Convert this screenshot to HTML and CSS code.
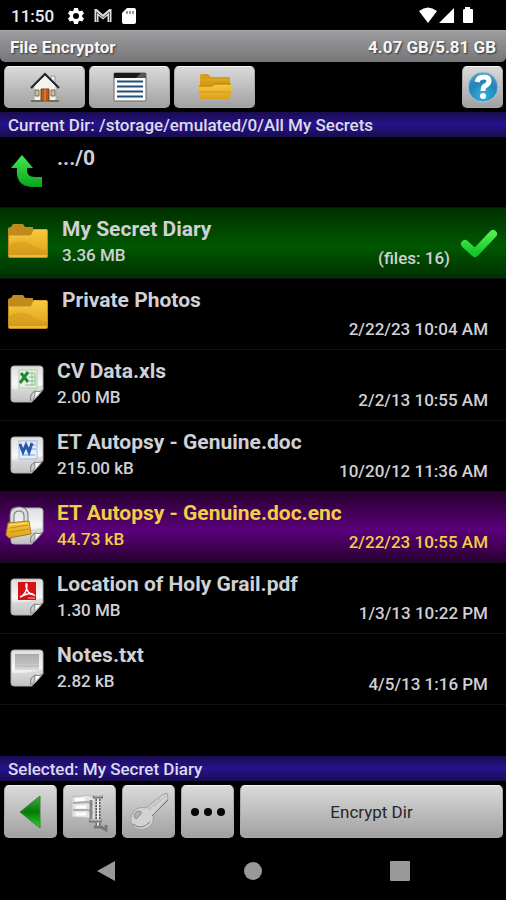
FILE: index.html
```html
<!DOCTYPE html>
<html lang="en">
<head>
<meta charset="utf-8">
<meta name="viewport" content="width=device-width, initial-scale=1">
<title>File Encryptor</title>
<link rel="stylesheet" href="styles.css">
</head>
<body>
<svg class="defs" aria-hidden="true">
  <defs>
    <linearGradient id="gold" x1="0" y1="0" x2="0" y2="1"><stop offset="0" stop-color="#f8c83a"/><stop offset="1" stop-color="#dda01c"/></linearGradient>
    <linearGradient id="paper" x1="0" y1="0" x2="0" y2="1"><stop offset="0" stop-color="#dedede"/><stop offset=".5" stop-color="#f8f8f8"/><stop offset="1" stop-color="#c4c4c4"/></linearGradient>
    <linearGradient id="green" x1="0" y1="0" x2="0" y2="1"><stop offset="0" stop-color="#45e84f"/><stop offset="1" stop-color="#08a51c"/></linearGradient>
    <linearGradient id="tick" x1="0" y1="0" x2="0" y2="1"><stop offset="0" stop-color="#4af04a"/><stop offset="1" stop-color="#14c62c"/></linearGradient>
    <linearGradient id="arrow" x1="0" y1="0" x2="0" y2="1"><stop offset="0" stop-color="#36b336"/><stop offset=".5" stop-color="#067806"/><stop offset="1" stop-color="#22dd22"/></linearGradient>
    <linearGradient id="note" x1="0" y1="0" x2="0" y2="1"><stop offset="0" stop-color="#a8a8a8"/><stop offset="1" stop-color="#dadada"/></linearGradient>
    <radialGradient id="blue" cx=".5" cy=".8" r=".8"><stop offset="0" stop-color="#38b0e0"/><stop offset=".6" stop-color="#2484b8"/><stop offset="1" stop-color="#5b9fc8"/></radialGradient>
    <symbol id="folder" viewBox="0 0 42 38">
      <path d="M1 6Q1 4 4 4L6 1H16L18 4H26V6H38Q41 6 41 8V33Q41 35 39 35H3Q1 35 1 33Z" fill="#c08a1c"/>
      <path d="M2 13H24L27 7H40V33Q40 34 38 34H3Q2 34 2 33Z" fill="url(#gold)"/>
      <path d="M2 13H24L27 7H40" fill="none" stroke="#f2c850"/>
      <path d="M2 22Q10 17 20 19Q34 28 40 28V33Q40 34 38 34H2Z" fill="#c78a14" opacity=".35"/>
      <path d="M2 33H40" stroke="#ffda62"/>
    </symbol>
    <symbol id="page" viewBox="0 0 36 38">
      <path d="M5 1H31Q34 1 34 4V25L23 37H5Q2 37 2 34V4Q2 1 5 1Z" fill="url(#paper)" stroke="#aaa"/>
      <path d="M2 24Q18 25 34 20V25L23 37H5Q2 37 2 34Z" fill="#bbb" opacity=".35"/>
      <path d="M34 25Q30 28 26 26Q27 32 23 37Z" fill="#fff" stroke="#858585"/>
      <path d="M22 36Q20 29 26 26" fill="none" stroke="#777"/>
    </symbol>
  </defs>
</svg>

<header>
  <div class="status">
    <span class="clock">11:50</span>
    <svg class="gear" width="16" height="16" viewBox="0 0 16 16"><path fill="#fff" fill-rule="evenodd" d="M6 0H10L10.500 2.500L12 3.300L14.300 2.400L16 5.500L14.200 7.200V8.800L16 10.500L14.300 13.600L12 12.700L10.500 13.500L10 16H6L5.500 13.500L4 12.700L1.700 13.600L0 10.500L1.800 8.800V7.200L0 5.500L1.700 2.400L4 3.300L5.500 2.500ZM8 5A3 3 0 1 0 8 11A3 3 0 1 0 8 5Z"/></svg>
    <svg width="18" height="14" viewBox="0 0 18 14"><path d="M2.500 13V2.500L9 8L15.500 2.500V13" fill="none" stroke="#ddd" stroke-width="4"/><path d="M2.500 12.500V3L9 8.500L15.500 3V12.500" fill="none" stroke="#555" stroke-width="1"/></svg>
    <svg class="sd" width="14" height="16" viewBox="0 0 14 16"><path d="M5 0H12Q14 0 14 2V14Q14 16 12 16H2Q0 16 0 14V5Z" fill="#fff"/><path d="M5 3V6M8 3V6M11 3V6" stroke="#777" stroke-width="1.500"/></svg>
    <svg class="signal" width="56" height="17" viewBox="0 0 56 17"><path d="M1 4Q10-3 19 4L10 16ZM21 16L36 1V16Z" fill="#fff"/><path d="M47 0H52V2H54Q55 2 55 3V15Q55 16 54 16H46Q45 16 45 15V3Q45 2 47 2Z" fill="#fff"/></svg>
  </div>
  <div class="titlebar"><h1>File Encryptor</h1><span>4.07 GB/5.81 GB</span></div>
  <nav class="toolbar">
    <button class="btn tool" aria-label="Home"><svg width="32" height="32" viewBox="0 0 32 32"><path d="M22 5H26V12L22 8Z" fill="#eee" stroke="#999"/><path d="M5 15L16 4L27 15V30H5Z" fill="#f4f3ee" stroke="#aaa"/><path d="M2 17L16 3L30 17" fill="none" stroke="#252525" stroke-width="2"/><path d="M12 18H20V30H12Z" fill="#bd5913" stroke="#71401d"/><path d="M16 18V30" stroke="#ed9852"/><path d="M6 19H10V25H6ZM22 19H26V25H22Z" fill="#cbbd9b" stroke="#776f60"/><path d="M2 30H12M20 30H30" stroke="#64735a" stroke-width="2"/></svg></button>
    <button class="btn tool" aria-label="List"><svg width="34" height="30" viewBox="0 0 34 30"><rect x="1" y="1" width="32" height="28" rx="1" fill="#fbfbfb" stroke="#666"/><path d="M1 1H33V6H1Z" fill="#171a20"/><path d="M23 6L28 1H33V6Z" fill="#555"/><path d="M4 9.500H30M4 14.500H30M4 19.500H30M4 24.500H30" stroke="#235078" stroke-width="2"/></svg></button>
    <button class="btn tool" aria-label="Folders"><svg width="34" height="28" viewBox="0 0 34 28"><path d="M2 3Q2 1 4 1H10L13 4H32V24H2Z" fill="#d99c18"/><path d="M2 7H32" stroke="#e2aa28"/><path d="M0 13H14L16 11H34L32 26H2Z" fill="url(#gold)"/><path d="M1 13H14L16 11H33" fill="none" stroke="#ab7a13"/><path d="M1 19H33" stroke="#cf9a20"/></svg></button>
    <button class="btn help" aria-label="Help"><svg width="34" height="34" viewBox="0 0 34 34"><circle cx="17" cy="17" r="15" fill="url(#blue)" stroke="#a9c9da"/><path d="M11 12Q12 7 18 7Q23 7 23 11Q23 14 19 16Q17 17 17 21" fill="none" stroke="#fff" stroke-width="5"/><circle cx="17" cy="26" r="3" fill="#fff"/></svg></button>
  </nav>
  <div class="pathbar">Current Dir: /storage/emulated/0/All My Secrets</div>
</header>

<main>
  <ul class="files">
    <li class="row">
      <svg class="icon" width="52" height="40" viewBox="0 0 52 40"><path d="M22 4L33 17H27Q26 26 35 26H42V36H32Q15 35 17 17H11Z" fill="url(#green)"/></svg>
      <div class="info"><h2>.../0</h2></div>
    </li>
    <li class="row folder green">
      <svg class="icon" width="52" height="40" viewBox="0 0 52 40"><use href="#folder" x="7" y="1" width="42" height="38"/></svg>
      <div class="info"><h2>My Secret Diary</h2><p>3.36 MB</p></div>
      <span class="meta">(files: 16)</span>
      <svg class="check" width="38" height="30" viewBox="0 0 38 30"><path d="M5 15L15 24L33 5" fill="none" stroke="url(#tick)" stroke-width="8" stroke-linecap="round" stroke-linejoin="round"/></svg>
    </li>
    <li class="row folder">
      <svg class="icon" width="52" height="40" viewBox="0 0 52 40"><use href="#folder" x="7" y="1" width="42" height="38"/></svg>
      <div class="info"><h2>Private Photos</h2></div><span class="meta">2/22/23 10:04 AM</span>
    </li>
    <li class="row">
      <svg class="icon" width="52" height="40" viewBox="0 0 52 40"><use href="#page" x="9" y="1" width="36" height="38"/><rect x="19" y="6" width="18" height="18" fill="#e7f2e6" stroke="#a9cea5"/><path d="M29 9H35V21H25M29 13H35M29 17H35M32 9V21" fill="none" stroke="#8abd91"/><path d="M21 9L28 18M28 8L20 19" stroke="#268837" stroke-width="3"/></svg>
      <div class="info"><h2>CV Data.xls</h2><p>2.00 MB</p></div><span class="meta">2/2/13 10:55 AM</span>
    </li>
    <li class="row">
      <svg class="icon" width="52" height="40" viewBox="0 0 52 40"><use href="#page" x="9" y="1" width="36" height="38"/><rect x="19" y="6" width="18" height="18" fill="#e7effa" stroke="#9db9df"/><path d="M31 10H36M31 14H36M22 20H35" stroke="#7ca2d2"/><path d="M20 9L23 17L26 10L29 17L32 8" fill="none" stroke="#2857aa" stroke-width="3"/></svg>
      <div class="info"><h2>ET Autopsy - Genuine.doc</h2><p>215.00 kB</p></div><span class="meta">10/20/12 11:36 AM</span>
    </li>
    <li class="row purple">
      <svg class="icon" width="52" height="40" viewBox="0 0 52 40"><use href="#page" x="9" y="1" width="36" height="38"/><path d="M12 18V10Q12 3 19 3T26 10V18" fill="none" stroke="#777" stroke-width="5"/><path d="M12 18V10Q12 3 19 3T26 10V18" fill="none" stroke="#ddd" stroke-width="3"/><path d="M8 17L29 15L31 28L9 32L6 29Z" fill="url(#gold)" stroke="#a87a1a"/><path d="M10 22L28 19M10 26L29 23" stroke="#c48c18"/><path d="M9 19L27 17" stroke="#ffe080"/></svg>
      <div class="info"><h2>ET Autopsy - Genuine.doc.enc</h2><p>44.73 kB</p></div><span class="meta">2/22/23 10:55 AM</span>
    </li>
    <li class="row">
      <svg class="icon" width="52" height="40" viewBox="0 0 52 40"><use href="#page" x="9" y="1" width="36" height="38"/><path d="M18 5H36V23H18Z" fill="#d81214"/><path d="M20 20Q27 17 27 8Q26 5 26 9Q27 17 34 18Q31 14 20 20" fill="none" stroke="#fff" stroke-width="1.500"/><path d="M28 21H35" stroke="#f4b2ae"/></svg>
      <div class="info"><h2>Location of Holy Grail.pdf</h2><p>1.30 MB</p></div><span class="meta">1/3/13 10:22 PM</span>
    </li>
    <li class="row">
      <svg class="icon" width="52" height="40" viewBox="0 0 52 40"><use href="#page" x="9" y="1" width="36" height="38"/><path d="M15 6H39V22H15Z" fill="url(#note)"/><path d="M15 9H39M15 12H39M15 15H39M15 18H39" stroke="#b3b3b3"/></svg>
      <div class="info"><h2>Notes.txt</h2><p>2.82 kB</p></div><span class="meta">4/5/13 1:16 PM</span>
    </li>
  </ul>
</main>

<footer>
  <div class="pathbar">Selected: My Secret Diary</div>
  <div class="actions">
    <button class="btn" aria-label="Back"><svg width="40" height="40" viewBox="0 0 40 40"><path d="M9 20L29 4V36Z" fill="url(#arrow)" stroke="#447d44"/></svg></button>
    <button class="btn" aria-label="Compress"><svg width="42" height="40" viewBox="0 0 42 40"><path d="M3 5L20 3L26 7V29L20 26L3 25Z" fill="#e3e3e3" stroke="#bbb"/><path d="M4 11L19 10L24 13M4 18L19 18L24 21" fill="none" stroke="#aaa" stroke-width="2"/><path d="M6 8L16 7M7 15H17M7 22H17" stroke="#fff" stroke-width="3"/><path d="M22 8V29" stroke="#888" stroke-width="3"/><path d="M29 4V36" stroke="#595959" stroke-width="5" stroke-dasharray="2 1"/><path d="M29 3V35" stroke="#eee" stroke-width="2"/><path d="M24 5H34M20 29H33M25 35H32L37 38V33" fill="none" stroke="#777" stroke-width="3"/><path d="M21 28H32M25 4H33" stroke="#ddd"/></svg></button>
    <button class="btn" aria-label="Key"><svg width="42" height="42" viewBox="0 0 42 42"><path d="M18 17L34 4L39 2L40 8L25 24Q27 33 19 37Q11 41 5 35Q0 28 6 20Q11 15 18 17Z" fill="#d2d2d2" stroke="#a0a0a0"/><path d="M20 19L38 5M20 15L23 19M25 11L28 15M30 7L33 10" fill="none" stroke="#b5b5b5"/><path d="M5 33Q13 40 22 31M24 25L40 9" fill="none" stroke="#777"/><path d="M6 25Q7 20 12 20Q15 21 12 24L8 28Z" fill="#b5b5b5" stroke="#888"/></svg></button>
    <button class="btn" aria-label="More"><svg width="36" height="10" viewBox="0 0 36 10"><g fill="#050505"><circle cx="5" cy="5" r="4"/><circle cx="18" cy="5" r="4"/><circle cx="31" cy="5" r="4"/></g></svg></button>
    <button class="btn encrypt">Encrypt Dir</button>
  </div>
  <nav class="system">
    <button aria-label="System back"><svg width="20" height="22" viewBox="0 0 20 22"><path d="M1 11L19 1V21Z" fill="#999"/></svg></button>
    <button aria-label="System home"><svg width="20" height="22" viewBox="0 0 20 22"><circle cx="10" cy="11" r="9" fill="#999"/></svg></button>
    <button aria-label="Recent apps"><svg width="20" height="22" viewBox="0 0 20 22"><rect y="1" width="20" height="20" rx="1" fill="#999"/></svg></button>
  </nav>
</footer>
</body>
</html>
```
FILE: styles.css
```css
* { box-sizing: border-box; }
body {
  margin: 0;
  min-height: 100vh;
  display: flex;
  flex-direction: column;
  background: #000;
  color: #d0d0d6;
  font-family: Roboto, sans-serif;
}
svg { display: block; flex: none; }
.defs { position: absolute; width: 0; height: 0; }
.status {
  height: 30px;
  padding: 1px 32px 0 11px;
  display: flex;
  align-items: center;
  gap: 10px;
  color: #eee;
}
.clock { font-size: 17px; line-height: 30px; font-weight: 500; }
.gear { margin-left: 4px; }
.signal { margin-left: auto; }
.titlebar {
  height: 32px;
  padding: 0 10px;
  display: flex;
  align-items: center;
  justify-content: space-between;
  border-top: 1px solid #aaa;
  border-radius: 0 0 5px 5px;
  background: linear-gradient(#9c9c9f, #77777a);
  color: #f6f6f6;
  font-size: 17px;
  font-weight: 700;
  text-shadow: 1px 1px 2px #333;
}
h1 { margin: 0; font-size: 17px; font-weight: 700; }
.toolbar { display: flex; gap: 4px; padding: 4px 3px 4px 4px; }
.btn {
  height: 53px;
  width: 53px;
  padding: 0;
  display: flex;
  align-items: center;
  justify-content: center;
  border: 1px solid #aaa;
  border-top-color: #f2f2f2;
  border-radius: 5px;
  background: linear-gradient(#dadada, #a1a1a1);
  color: #262626;
  font: 17px/20px Roboto, sans-serif;
}
.btn.tool { width: 81px; height: 42px; }
.btn.help { width: 41px; height: 42px; margin-left: auto; }
.pathbar {
  height: 25px;
  padding: 0 8px;
  font-size: 17px;
  line-height: 26px;
  font-weight: 500;
  color: #dcdce8;
  background: linear-gradient(#190c4e, #27138c 50%, #190c4e);
}
main { flex: 1; }
.files { margin: 0; padding: 0; list-style: none; }
.row {
  height: 71px;
  display: flex;
  padding-right: 18px;
  border-bottom: 1px solid #111;
}
.icon { margin-top: 14px; }
.info { flex: 1; padding: 9px 0 0 5px; white-space: nowrap; }
.folder .info { padding-left: 10px; }
h2 { margin: 0; font-size: 21px; line-height: 24px; font-weight: 700; }
p { margin: 2px 0 0; font-size: 17px; line-height: 24px; font-weight: 500; }
.meta { align-self: flex-end; padding-bottom: 8px; font-size: 17px; line-height: 24px; font-weight: 500; white-space: nowrap; }
.check { margin: 21px 0 0 10px; }
.green { padding-right: 8px; background: linear-gradient(#002f00, #005800 55%, #002f00); }
.purple { background: linear-gradient(#28002f, #5b007b 55%, #28002f); color: #f1cf43; }
.actions { display: flex; gap: 6px; padding: 4px 3px 4px 4px; }
.btn.encrypt { flex: 1; width: auto; }
.system { height: 58px; padding: 0 96px; display: flex; align-items: center; justify-content: space-between; }
.system button { border: 0; padding: 0; background: none; }
```
